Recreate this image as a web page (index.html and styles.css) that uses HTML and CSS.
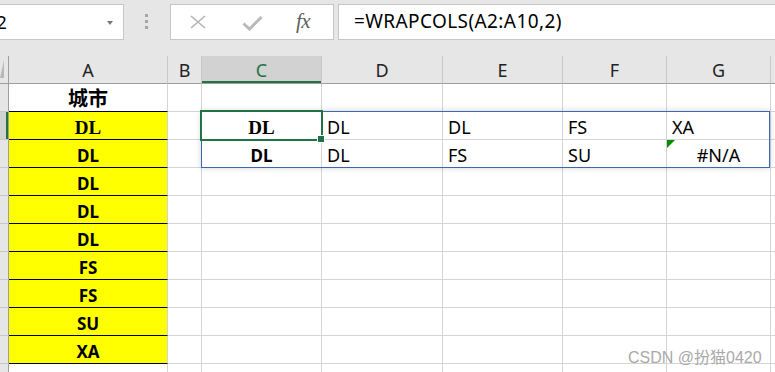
FILE: index.html
```html
<!DOCTYPE html>
<html lang="zh">
<head>
<meta charset="utf-8">
<title>WRAPCOLS</title>
<link rel="stylesheet" href="styles.css">
</head>
<body>
<div class="topbar">
  <div class="namebox"><span class="nametext">C2</span><span class="dd"></span></div>
  <div class="grip"><i></i><i></i><i></i></div>
  <div class="fbtns">
    <svg class="ico-x" width="18" height="14" viewBox="0 0 18 14"><path d="M2 1 L16 13 M16 1 L2 13" stroke="#b3b3b3" stroke-width="1.6" fill="none"/></svg>
    <svg class="ico-ok" width="21" height="16" viewBox="0 0 21 16"><path d="M1.5 8.5 L7.5 14 L19.5 2" stroke="#b9b9b9" stroke-width="3" fill="none"/></svg>
    <span class="fx">fx</span>
  </div>
  <div class="formula">=WRAPCOLS(A2:A10,2)</div>
</div>

<div class="sheet">
  <div class="row hdr">
    <div class="rh corner"><span class="tri"></span></div>
    <div class="ch">A</div><div class="ch">B</div><div class="ch on">C</div><div class="ch">D</div><div class="ch">E</div><div class="ch">F</div><div class="ch">G</div><div class="ch"></div>
  </div>
  <div class="row">
    <div class="rh"></div>
    <div class="c title">城市</div><div class="c"></div><div class="c"></div><div class="c"></div><div class="c"></div><div class="c"></div><div class="c"></div><div class="c"></div>
  </div>
  <div class="row">
    <div class="rh on"></div>
    <div class="c y serif">DL</div><div class="c"></div><div class="c serif ctr">DL</div><div class="c">DL</div><div class="c">DL</div><div class="c">FS</div><div class="c">XA</div><div class="c"></div>
  </div>
  <div class="row">
    <div class="rh"></div>
    <div class="c y">DL</div><div class="c"></div><div class="c bold ctr">DL</div><div class="c">DL</div><div class="c">FS</div><div class="c">SU</div><div class="c err"><span class="flag"></span>#N/A</div><div class="c"></div>
  </div>
  <div class="row">
    <div class="rh"></div>
    <div class="c y">DL</div><div class="c"></div><div class="c"></div><div class="c"></div><div class="c"></div><div class="c"></div><div class="c"></div><div class="c"></div>
  </div>
  <div class="row">
    <div class="rh"></div>
    <div class="c y">DL</div><div class="c"></div><div class="c"></div><div class="c"></div><div class="c"></div><div class="c"></div><div class="c"></div><div class="c"></div>
  </div>
  <div class="row">
    <div class="rh"></div>
    <div class="c y">DL</div><div class="c"></div><div class="c"></div><div class="c"></div><div class="c"></div><div class="c"></div><div class="c"></div><div class="c"></div>
  </div>
  <div class="row">
    <div class="rh"></div>
    <div class="c y">FS</div><div class="c"></div><div class="c"></div><div class="c"></div><div class="c"></div><div class="c"></div><div class="c"></div><div class="c"></div>
  </div>
  <div class="row">
    <div class="rh"></div>
    <div class="c y">FS</div><div class="c"></div><div class="c"></div><div class="c"></div><div class="c"></div><div class="c"></div><div class="c"></div><div class="c"></div>
  </div>
  <div class="row">
    <div class="rh"></div>
    <div class="c y">SU</div><div class="c"></div><div class="c"></div><div class="c"></div><div class="c"></div><div class="c"></div><div class="c"></div><div class="c"></div>
  </div>
  <div class="row">
    <div class="rh"></div>
    <div class="c y">XA</div><div class="c"></div><div class="c"></div><div class="c"></div><div class="c"></div><div class="c"></div><div class="c"></div><div class="c"></div>
  </div>
  <div class="row">
    <div class="rh"></div>
    <div class="c"></div><div class="c"></div><div class="c"></div><div class="c"></div><div class="c"></div><div class="c"></div><div class="c"></div><div class="c"></div>
  </div>

  <div class="spill"></div>
  <div class="selbox"><span class="handle"></span></div>
  <div class="watermark">CSDN @扮猫0420</div>
</div>
</body>
</html>
```

FILE: styles.css
```css
html, body {
  margin: 0;
  padding: 0;
  background: #ffffff;
  overflow: hidden;
}
body {
  width: 775px;
  height: 372px;
  font-family: "Noto Sans", "Noto Sans CJK SC", sans-serif;
  color: #000;
}

/* ---------- formula bar ---------- */
.topbar {
  height: 56px;
  background: #e6e6e6;
  display: flex;
  align-items: flex-start;
  padding-top: 4px;
  box-sizing: border-box;
}
.namebox {
  width: 124px;
  height: 36px;
  box-sizing: border-box;
  background: #fff;
  border: 1px solid #c6c6c6;
  border-left: none;
  display: flex;
  align-items: center;
  overflow: hidden;
  position: relative;
}
.nametext {
  font-size: 18px;
  margin-left: -15px;
  color: #000;
}
.dd {
  margin-left: auto;
  margin-right: 10px;
  width: 0;
  height: 0;
  border-left: 3.5px solid transparent;
  border-right: 3.5px solid transparent;
  border-top: 4px solid #7a7a7a;
  margin-top: 2px;
}
.grip {
  width: 3px;
  margin-left: 21px;
  margin-top: 10px;
  display: flex;
  flex-direction: column;
  gap: 3px;
}
.grip i {
  display: block;
  width: 3px;
  height: 3px;
  background: #a6a6a6;
}
.fbtns {
  margin-left: 22px;
  width: 164px;
  height: 36px;
  box-sizing: border-box;
  background: #fff;
  border: 1px solid #c6c6c6;
  display: flex;
  align-items: center;
  position: relative;
}
.ico-x { margin-left: 18px; }
.ico-ok { margin-left: 35px; margin-top: 1px; }
.fx {
  margin-left: 33px;
  font-family: "Liberation Serif", serif;
  font-style: italic;
  font-size: 21px;
  color: #5e5e5e;
  margin-top: -2px;
  letter-spacing: -0.5px;
}
.formula {
  margin-left: 4px;
  flex: 1;
  height: 36px;
  box-sizing: border-box;
  background: #fff;
  border: 1px solid #c6c6c6;
  border-right: none;
  font-size: 19px;
  letter-spacing: 0.4px;
  line-height: 33px;
  padding-left: 15px;
  color: #000;
}

/* ---------- sheet ---------- */
.sheet {
  position: relative;
  height: 316px;
  overflow: hidden;
}
.row {
  display: grid;
  grid-template-columns: 9px 159px 34px 120px 121px 120px 104px 104px 40px;
  height: 28px;
}
.row > div {
  box-sizing: border-box;
  height: 28px;
  border-right: 1px solid #d4d4d4;
  border-bottom: 1px solid #d4d4d4;
  position: relative;
}
.rh {
  background: #e6e6e6;
  border-right-color: #9e9e9e !important;
  border-bottom-color: #c8c8c8 !important;
}
.rh.on {
  background: #d2d2d2;
  box-shadow: inset -2px 0 0 #217346;
}
.corner {
  border-bottom-color: #9e9e9e !important;
}
.tri {
  position: absolute;
  left: 0;
  top: 4px;
  width: 0;
  height: 0;
  border-top: 18px solid transparent;
  border-right: 4px solid #b8b8b8;
}
.hdr .ch {
  background: #e6e6e6;
  border-right-color: #c8c8c8;
  border-bottom-color: #9e9e9e;
  text-align: center;
  font-size: 18px;
  line-height: 28px;
  color: #222;
}
.hdr .ch.on {
  background: #d2d2d2;
  color: #217346;
  box-shadow: inset 0 -2px 0 #217346;
}

.c {
  font-size: 18px;
  line-height: 31px;
  padding-left: 5px;
  white-space: nowrap;
}
.c.y {
  background: #ffff00;
  border-bottom-color: #000 !important;
  text-align: center;
  font-weight: bold;
  font-size: 17px;
  padding-left: 0;
}
.c.title {
  text-align: center;
  font-weight: bold;
  font-size: 20px;
  font-family: "Noto Sans CJK SC", sans-serif;
  line-height: 28px;
  border-bottom-color: #000;
  padding-left: 0;
}
.c.serif {
  font-family: "Liberation Serif", "Times New Roman", serif;
  font-weight: bold;
  font-size: 19px;
}
.c.bold {
  font-weight: bold;
  font-size: 17px;
}
.c.ctr {
  text-align: center;
  padding-left: 0;
}
.c.err {
  text-align: center;
  padding-left: 0;
}
.flag {
  position: absolute;
  left: 0;
  top: 0;
  width: 0;
  height: 0;
  border-top: 8px solid #008a00;
  border-right: 8px solid transparent;
}

/* overlays */
.spill {
  position: absolute;
  left: 201px;
  top: 55px;
  width: 569px;
  height: 57px;
  box-sizing: border-box;
  border: 1px solid #3d65b5;
  box-shadow: 0 0 6px rgba(0, 0, 0, 0.18);
  pointer-events: none;
}
.selbox {
  position: absolute;
  left: 200px;
  top: 54px;
  width: 123px;
  height: 31px;
  box-sizing: border-box;
  border: 2px solid #217346;
}
.handle {
  position: absolute;
  right: -4px;
  bottom: -4px;
  width: 6px;
  height: 6px;
  background: #217346;
  border: 1px solid #fff;
}
.watermark {
  position: absolute;
  left: 628px;
  top: 288px;
  font-family: "Liberation Sans", "Noto Sans CJK SC", sans-serif;
  font-size: 16px;
  color: #a9a9a9;
  white-space: nowrap;
}
```
